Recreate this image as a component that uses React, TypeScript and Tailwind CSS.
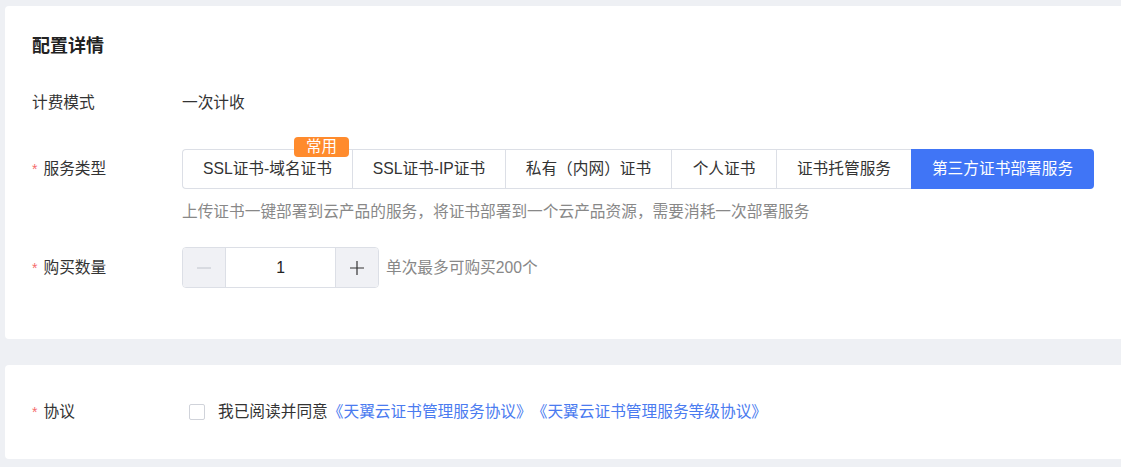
import React from 'react'

const tabs = [
  { label: 'SSL证书-域名证书', w: 'w-[170px]', badge: true },
  { label: 'SSL证书-IP证书', w: 'w-[153px]' },
  { label: '私有（内网）证书', w: 'w-[166px]' },
  { label: '个人证书', w: 'w-[105px]' },
  { label: '证书托管服务', w: 'w-[135px]' },
  { label: '第三方证书部署服务', w: 'w-[183px]', active: true },
]

function Label({ text, required }: { text: string; required?: boolean }) {
  return (
    <div className="w-[150px] shrink-0 text-[15.7px] text-[#333]">
      {required && <span className="text-[#f56c6c] mr-[6px] text-[14px]">*</span>}
      {text}
    </div>
  )
}

export default function App() {
  return (
    <div
      className="min-h-screen bg-[#eef0f4] pt-[6px] pl-[5px] overflow-hidden"
      style={{ fontFamily: '"Liberation Sans", "Noto Sans CJK SC", sans-serif' }}
    >
      {/* 配置详情 */}
      <div className="w-[1130px] bg-white rounded-l-[4px] pl-[27px] pb-[51px]">
        <div className="h-[80px] flex items-center">
          <h2 className="text-[18px] font-bold text-[#222]">配置详情</h2>
        </div>

        <div className="h-[34px] flex items-center">
          <Label text="计费模式" />
          <span className="text-[15.7px] text-[#333]">一次计收</span>
        </div>

        <div className="mt-[29px] h-[40px] flex items-center">
          <Label text="服务类型" required />
          <div className="flex">
            {tabs.map((t, i) => (
              <div
                key={t.label}
                className={
                  'relative h-[40px] flex items-center justify-center text-[15.7px] ' +
                  t.w +
                  (t.active
                    ? ' bg-[#4075f6] text-white rounded-r-[4px]'
                    : ' border-y border-[#dcdfe6] text-[#333]') +
                  (i === 0 ? ' border-l rounded-l-[4px]' : '') +
                  (!t.active && i > 0 ? ' border-l' : '')
                }
              >
                {t.label}
                {t.badge && (
                  <span className="absolute right-[3px] -top-[13px] w-[55px] h-[20px] rounded-[4px] bg-[#ff8b2d] text-white text-[15.5px] leading-[20px] text-center">
                    常用
                  </span>
                )}
              </div>
            ))}
          </div>
        </div>

        <div className="mt-[12px] pl-[150px] text-[15.7px] leading-[22px] text-[#888]">
          上传证书一键部署到云产品的服务，将证书部署到一个云产品资源，需要消耗一次部署服务
        </div>

        <div className="mt-[24px] h-[41px] flex items-center">
          <Label text="购买数量" required />
          <div className="flex h-[41px] border border-[#dcdfe6] rounded-[4px] overflow-hidden">
            <button className="w-[43px] bg-[#f0f1f5] border-r border-[#dcdfe6] flex items-center justify-center">
              <svg width="16" height="16" viewBox="0 0 16 16">
                <line x1="1" y1="8" x2="15" y2="8" stroke="#c0c4cc" strokeWidth="1" />
              </svg>
            </button>
            <div className="w-[109px] flex items-center justify-center text-[15.7px] text-[#222]">1</div>
            <button className="w-[43px] bg-[#f0f1f5] border-l border-[#dcdfe6] flex items-center justify-center">
              <svg width="16" height="16" viewBox="0 0 16 16">
                <line x1="1" y1="8" x2="15" y2="8" stroke="#333" strokeWidth="1.2" />
                <line x1="8" y1="1" x2="8" y2="15" stroke="#333" strokeWidth="1.2" />
              </svg>
            </button>
          </div>
          <span className="ml-[7px] text-[15.7px] text-[#888]">单次最多可购买200个</span>
        </div>
      </div>

      {/* 协议 */}
      <div className="mt-[26px] w-[1130px] h-[94px] bg-white rounded-l-[4px] pl-[27px] flex items-center">
        <Label text="协议" required />
        <span className="ml-[7px] w-[16px] h-[16px] border border-[#d0d3da] rounded-[2px] bg-white" />
        <span className="ml-[13px] text-[15.7px] text-[#333]">我已阅读并同意</span>
        <a className="text-[15.7px] text-[#4a7bf0]">《天翼云证书管理服务协议》</a>
        <a className="text-[15.7px] text-[#4a7bf0]">《天翼云证书管理服务等级协议》</a>
      </div>
    </div>
  )
}
